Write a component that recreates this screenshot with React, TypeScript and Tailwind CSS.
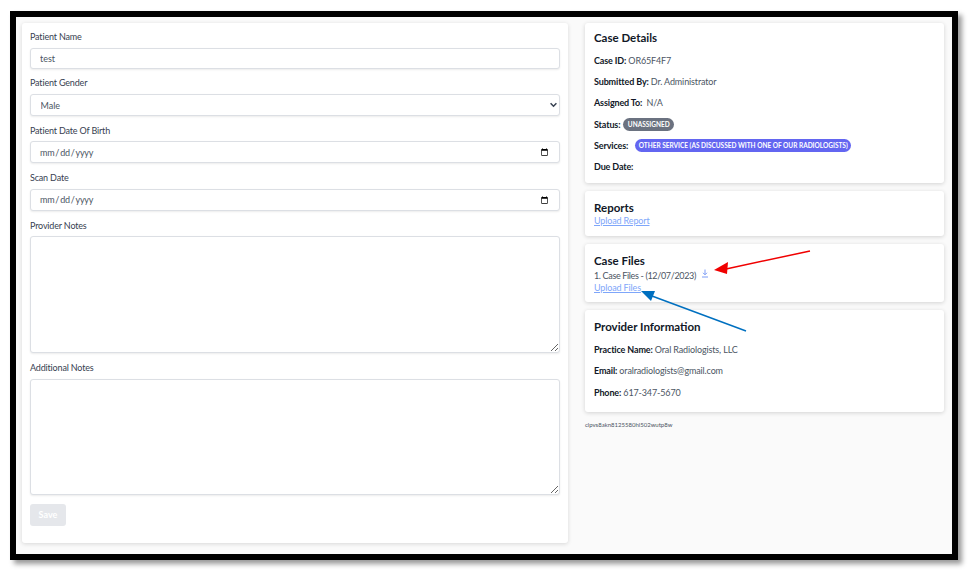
import React from "react";

function Label({ children, className = "" }: { children: React.ReactNode; className?: string }) {
  return <label className={"block text-[9px] leading-[12px] tracking-[-0.17px] text-[#374151] " + className}>{children}</label>;
}

const fieldCls =
  "block w-full rounded-[3px] border border-[#dcdfe4] bg-white text-[9px] text-[#4b5563] shadow-[0_1px_2px_rgba(0,0,0,0.08)] outline-none";

function Row({ label, children, className = "" }: { label: string; children?: React.ReactNode; className?: string }) {
  return (
    <p className={"text-[9px] leading-[12px] tracking-[-0.14px] text-[#4b5563] " + className}>
      <b className="font-bold text-[#111827]">{label}</b>
      {children}
    </p>
  );
}

function Card({ children, className = "" }: { children: React.ReactNode; className?: string }) {
  return <div className={"rounded-[3px] bg-white px-[9px] shadow-[0_1px_4px_rgba(0,0,0,0.16)] " + className}>{children}</div>;
}

export default function App() {
  return (
    <div className="relative h-[574px] w-[972px] overflow-hidden bg-white pl-[10px] pt-[11px] font-['Lato',sans-serif]">
      <div className="flex h-[549px] w-[948px] gap-[17px] border-[6px] border-black bg-[#fafafa] pl-[6px] pr-[8px] pt-[6px] shadow-[4px_4px_5px_rgba(0,0,0,0.4)]">
        <div className="h-[520px] w-[546px] shrink-0 rounded-[3px] bg-white px-[8px] pt-[8px] shadow-[0_1px_4px_rgba(0,0,0,0.14)]">
          <Label>Patient Name</Label>
          <input defaultValue="test" className={fieldCls + " mt-[5px] h-[21px] px-[9px]"} />
          <Label className="mt-[8px]">Patient Gender</Label>
          <div className="relative mt-[5px]">
            <select defaultValue="Male" className={fieldCls + " h-[22px] appearance-none px-[9.5px] pt-[1px]"}>
              <option>Male</option>
            </select>
            <svg className="pointer-events-none absolute right-[3px] top-[8px]" width="7" height="6" viewBox="0 0 7 6" fill="none" stroke="#374151" strokeWidth="1.5">
              <path d="M0.6 1.2L3.5 4.2L6.4 1.2" />
            </svg>
          </div>
          <Label className="mt-[9px]">Patient Date Of Birth</Label>
          <input type="date" className={fieldCls + " mt-[4px] h-[22px] px-[8px] pt-[1px] text-[8.5px] tracking-[-0.25px]"} />
          <Label className="mt-[9px]">Scan Date</Label>
          <input type="date" className={fieldCls + " mt-[5px] h-[22px] px-[8px] text-[8.5px] tracking-[-0.25px]"} />
          <Label className="mt-[9px]">Provider Notes</Label>
          <textarea className={fieldCls + " mt-[4px] h-[117px]"} />
          <Label className="mt-[9px]">Additional Notes</Label>
          <textarea className={fieldCls + " mt-[5px] h-[116px]"} />
          <button className="mt-[9px] block h-[22px] w-[36px] rounded-[3px] bg-[#e5e7eb] text-[9px] font-bold text-white">Save</button>
        </div>

        <div className="flex w-[359px] shrink-0 flex-col gap-[8px]">
          <Card className="h-[160px] pt-[8px]">
            <h2 className="text-[11.5px] font-bold leading-[14px] text-[#111827]">Case Details</h2>
            <Row label="Case ID:" className="mt-[10px]"> OR65F4F7</Row>
            <Row label="Submitted By:" className="mt-[9px]"> Dr. Administrator</Row>
            <Row label="Assigned To:" className="mt-[9px]">&nbsp; N/A</Row>
            <div className="mt-[9px] flex items-center gap-[3px] text-[9px] leading-[12px] tracking-[-0.14px]">
              <b className="font-bold text-[#111827]">Status:</b>
              <span className="rounded-full bg-[#6b7280] px-[4.5px] text-[6.5px] font-bold leading-[13px] tracking-normal text-white">UNASSIGNED</span>
            </div>
            <div className="mt-[8px] flex items-center gap-[7px] text-[9px] leading-[12px] tracking-[-0.14px]">
              <b className="font-bold text-[#111827]">Services:</b>
              <span className="rounded-full bg-[#6366f1] px-[3.5px] text-[6.5px] font-bold leading-[13px] tracking-normal text-white">OTHER SERVICE (AS DISCUSSED WITH ONE OF OUR RADIOLOGISTS)</span>
            </div>
            <Row label="Due Date:" className="mt-[9px]" />
          </Card>

          <Card className="h-[45px] pt-[10px]">
            <h2 className="text-[11.5px] font-bold leading-[14px] text-[#111827]">Reports</h2>
            <a className="block text-[9px] leading-[12px] tracking-[-0.14px] text-[#7ea6fa] underline">Upload Report</a>
          </Card>

          <Card className="h-[58px] pt-[10px]">
            <h2 className="text-[11.5px] font-bold leading-[14px] text-[#111827]">Case Files</h2>
            <div className="mt-[1px] flex items-start gap-[5px] pt-[1px] text-[9px] leading-[12px] tracking-[-0.35px] text-[#4b5563]">
              <span>1. Case Files - (12/07/2023)</span>
              <svg width="8" height="9" viewBox="0 0 8 9" fill="none" stroke="#7c9cf5" strokeWidth="1" className="-mt-[1px]">
                <path d="M4 0.5V5.5M2 3.8L4 5.8L6 3.8M1 8H7" />
              </svg>
            </div>
            <a className="block text-[9px] leading-[12px] tracking-[-0.14px] text-[#7ea6fa] underline">Upload Files</a>
          </Card>

          <Card className="h-[102px] pt-[10px]">
            <h2 className="text-[11.5px] font-bold leading-[14px] text-[#111827]">Provider Information</h2>
            <Row label="Practice Name:" className="mt-[10px]"> Oral Radiologists, LLC</Row>
            <Row label="Email:" className="mt-[9px]"> oralradiologists@gmail.com</Row>
            <Row label="Phone:" className="mt-[10px]"> 617-347-5670</Row>
          </Card>

          <p className="mt-[1px] text-[6px] leading-[8px] text-[#4b5563]">clpvs8akn8125580hl502wutp8w</p>
        </div>
      </div>

      <svg className="pointer-events-none absolute left-0 top-0" width="972" height="574" viewBox="0 0 972 574">
        <path d="M810 251L726 269" stroke="#f00000" strokeWidth="1.5" fill="none" />
        <path d="M714 270L728 262L727 274Z" fill="#f00000" />
        <path d="M746 331L652 296" stroke="#0070c0" strokeWidth="1.5" fill="none" />
        <path d="M641 291L655 291L651 301Z" fill="#0070c0" />
      </svg>
    </div>
  );
}
